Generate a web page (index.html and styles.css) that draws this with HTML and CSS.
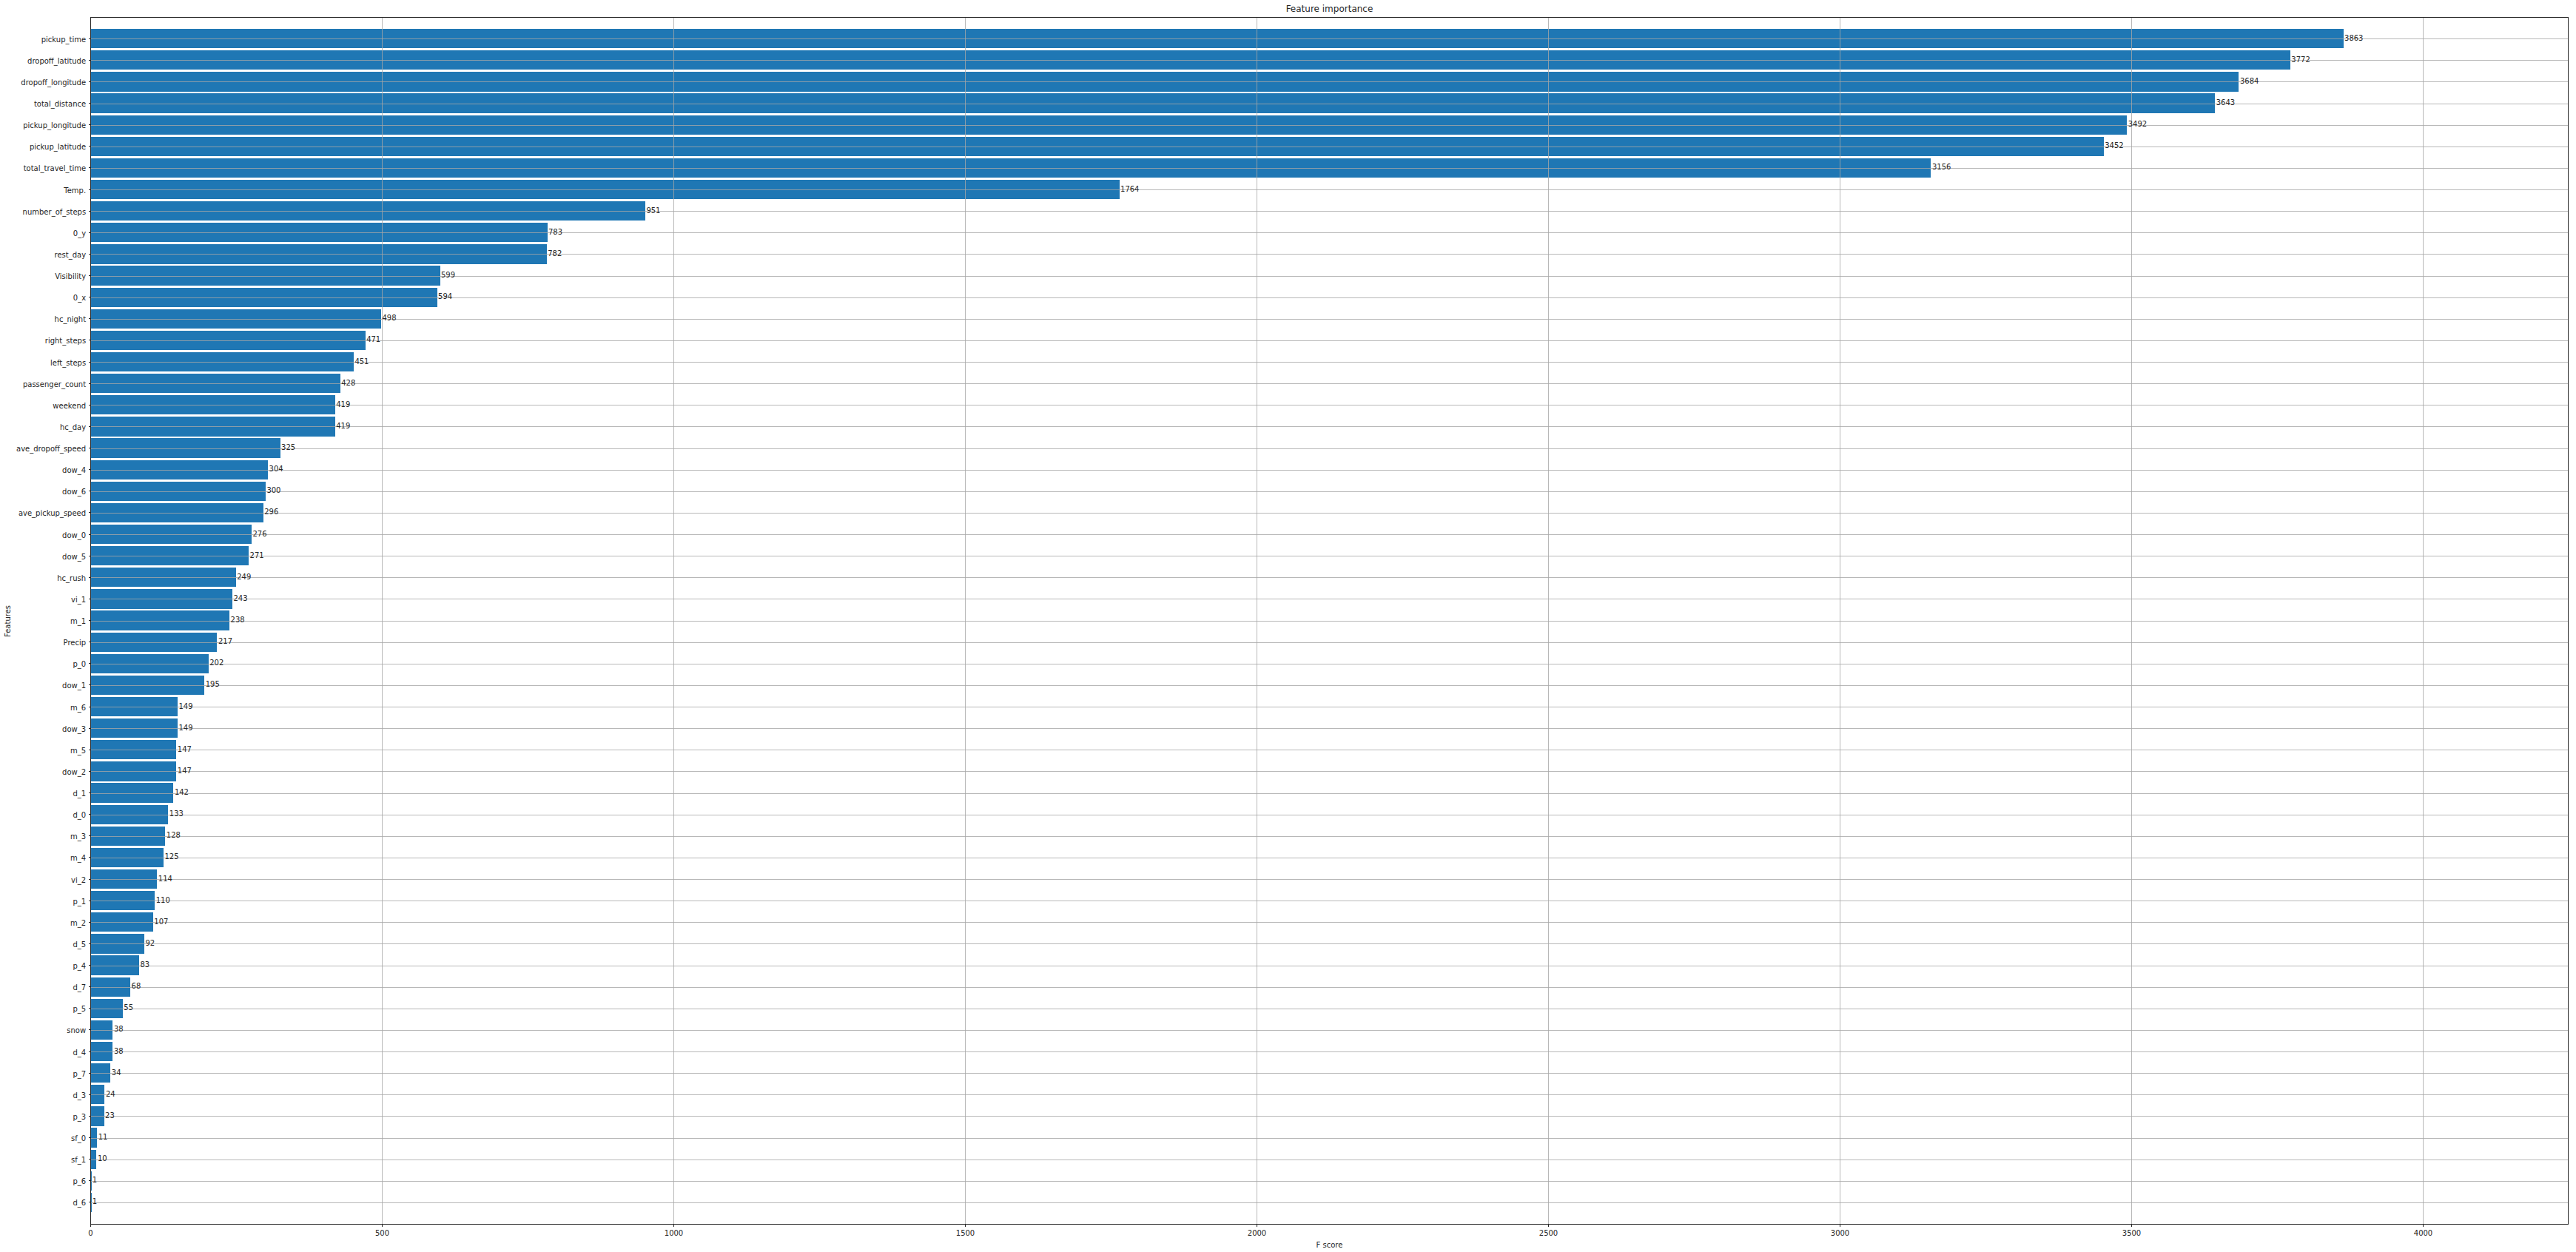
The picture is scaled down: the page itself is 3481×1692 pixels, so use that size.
FILE: index.html
```html
<!DOCTYPE html>
<html lang="en">
<head>
<meta charset="utf-8">
<title>Feature importance</title>
<link rel="stylesheet" href="styles.css">
</head>
<body>
<main class="figure">
  <h1 class="title">Feature importance</h1>
  <div class="ylabel"><span>Features</span></div>
  <ol class="yticks">
    <li>pickup_time</li><li>dropoff_latitude</li><li>dropoff_longitude</li><li>total_distance</li><li>pickup_longitude</li>
    <li>pickup_latitude</li><li>total_travel_time</li><li>Temp.</li><li>number_of_steps</li><li>0_y</li>
    <li>rest_day</li><li>Visibility</li><li>0_x</li><li>hc_night</li><li>right_steps</li>
    <li>left_steps</li><li>passenger_count</li><li>weekend</li><li>hc_day</li><li>ave_dropoff_speed</li>
    <li>dow_4</li><li>dow_6</li><li>ave_pickup_speed</li><li>dow_0</li><li>dow_5</li>
    <li>hc_rush</li><li>vi_1</li><li>m_1</li><li>Precip</li><li>p_0</li>
    <li>dow_1</li><li>m_6</li><li>dow_3</li><li>m_5</li><li>dow_2</li>
    <li>d_1</li><li>d_0</li><li>m_3</li><li>m_4</li><li>vi_2</li>
    <li>p_1</li><li>m_2</li><li>d_5</li><li>p_4</li><li>d_7</li>
    <li>p_5</li><li>snow</li><li>d_4</li><li>p_7</li><li>d_3</li>
    <li>p_3</li><li>sf_0</li><li>sf_1</li><li>p_6</li><li>d_6</li>
  </ol>
  <div class="axes">
    <div class="bars">
      <div class="row"><i class="bar" style="--v:3863"></i><span class="val">3863</span></div>
      <div class="row"><i class="bar" style="--v:3772"></i><span class="val">3772</span></div>
      <div class="row"><i class="bar" style="--v:3684"></i><span class="val">3684</span></div>
      <div class="row"><i class="bar" style="--v:3643"></i><span class="val">3643</span></div>
      <div class="row"><i class="bar" style="--v:3492"></i><span class="val">3492</span></div>
      <div class="row"><i class="bar" style="--v:3452"></i><span class="val">3452</span></div>
      <div class="row"><i class="bar" style="--v:3156"></i><span class="val">3156</span></div>
      <div class="row"><i class="bar" style="--v:1764"></i><span class="val">1764</span></div>
      <div class="row"><i class="bar" style="--v:951"></i><span class="val">951</span></div>
      <div class="row"><i class="bar" style="--v:783"></i><span class="val">783</span></div>
      <div class="row"><i class="bar" style="--v:782"></i><span class="val">782</span></div>
      <div class="row"><i class="bar" style="--v:599"></i><span class="val">599</span></div>
      <div class="row"><i class="bar" style="--v:594"></i><span class="val">594</span></div>
      <div class="row"><i class="bar" style="--v:498"></i><span class="val">498</span></div>
      <div class="row"><i class="bar" style="--v:471"></i><span class="val">471</span></div>
      <div class="row"><i class="bar" style="--v:451"></i><span class="val">451</span></div>
      <div class="row"><i class="bar" style="--v:428"></i><span class="val">428</span></div>
      <div class="row"><i class="bar" style="--v:419"></i><span class="val">419</span></div>
      <div class="row"><i class="bar" style="--v:419"></i><span class="val">419</span></div>
      <div class="row"><i class="bar" style="--v:325"></i><span class="val">325</span></div>
      <div class="row"><i class="bar" style="--v:304"></i><span class="val">304</span></div>
      <div class="row"><i class="bar" style="--v:300"></i><span class="val">300</span></div>
      <div class="row"><i class="bar" style="--v:296"></i><span class="val">296</span></div>
      <div class="row"><i class="bar" style="--v:276"></i><span class="val">276</span></div>
      <div class="row"><i class="bar" style="--v:271"></i><span class="val">271</span></div>
      <div class="row"><i class="bar" style="--v:249"></i><span class="val">249</span></div>
      <div class="row"><i class="bar" style="--v:243"></i><span class="val">243</span></div>
      <div class="row"><i class="bar" style="--v:238"></i><span class="val">238</span></div>
      <div class="row"><i class="bar" style="--v:217"></i><span class="val">217</span></div>
      <div class="row"><i class="bar" style="--v:202"></i><span class="val">202</span></div>
      <div class="row"><i class="bar" style="--v:195"></i><span class="val">195</span></div>
      <div class="row"><i class="bar" style="--v:149"></i><span class="val">149</span></div>
      <div class="row"><i class="bar" style="--v:149"></i><span class="val">149</span></div>
      <div class="row"><i class="bar" style="--v:147"></i><span class="val">147</span></div>
      <div class="row"><i class="bar" style="--v:147"></i><span class="val">147</span></div>
      <div class="row"><i class="bar" style="--v:142"></i><span class="val">142</span></div>
      <div class="row"><i class="bar" style="--v:133"></i><span class="val">133</span></div>
      <div class="row"><i class="bar" style="--v:128"></i><span class="val">128</span></div>
      <div class="row"><i class="bar" style="--v:125"></i><span class="val">125</span></div>
      <div class="row"><i class="bar" style="--v:114"></i><span class="val">114</span></div>
      <div class="row"><i class="bar" style="--v:110"></i><span class="val">110</span></div>
      <div class="row"><i class="bar" style="--v:107"></i><span class="val">107</span></div>
      <div class="row"><i class="bar" style="--v:92"></i><span class="val">92</span></div>
      <div class="row"><i class="bar" style="--v:83"></i><span class="val">83</span></div>
      <div class="row"><i class="bar" style="--v:68"></i><span class="val">68</span></div>
      <div class="row"><i class="bar" style="--v:55"></i><span class="val">55</span></div>
      <div class="row"><i class="bar" style="--v:38"></i><span class="val">38</span></div>
      <div class="row"><i class="bar" style="--v:38"></i><span class="val">38</span></div>
      <div class="row"><i class="bar" style="--v:34"></i><span class="val">34</span></div>
      <div class="row"><i class="bar" style="--v:24"></i><span class="val">24</span></div>
      <div class="row"><i class="bar" style="--v:23"></i><span class="val">23</span></div>
      <div class="row"><i class="bar" style="--v:11"></i><span class="val">11</span></div>
      <div class="row"><i class="bar" style="--v:10"></i><span class="val">10</span></div>
      <div class="row"><i class="bar" style="--v:1"></i><span class="val">1</span></div>
      <div class="row"><i class="bar" style="--v:1"></i><span class="val">1</span></div>
    </div>
    <div class="vgrid"><b></b><b></b><b></b><b></b><b></b><b></b><b></b><b></b></div>
  </div>
  <ul class="xticks">
    <li>0</li><li>500</li><li>1000</li><li>1500</li><li>2000</li><li>2500</li><li>3000</li><li>3500</li><li>4000</li>
  </ul>
  <div class="xlabel">F score</div>
</main>
</body>
</html>
```
FILE: styles.css
```css
* { box-sizing: border-box; }
html, body { margin: 0; padding: 0; background: #fff; }
body {
  width: 3481px;
  height: 1692px;
  overflow: hidden;
  font-family: "DejaVu Sans", sans-serif;
  font-size: 10px;
  color: #262626;
}
.figure {
  display: grid;
  grid-template-columns: 22px 100px 3349px;
  grid-template-rows: 23px 1632px auto auto;
}
.title {
  grid-column: 3;
  grid-row: 1;
  margin: 0;
  padding-top: 5px;
  font-size: 12px;
  font-weight: 400;
  line-height: 14px;
  text-align: center;
}
.ylabel {
  grid-column: 1;
  grid-row: 2;
  display: flex;
  align-items: center;
  justify-content: flex-end;
  padding-right: 5px;
}
.ylabel span {
  writing-mode: vertical-rl;
  transform: rotate(180deg);
  line-height: 12px;
}
.yticks {
  grid-column: 2;
  grid-row: 2;
  list-style: none;
  margin: 0;
  padding: 14.6px 0 0;
  display: grid;
  grid-auto-rows: 29.13px;
}
.yticks li {
  display: flex;
  align-items: center;
  justify-content: flex-end;
  white-space: nowrap;
  padding-top: 2px;
}
.yticks li::after {
  content: "";
  width: 3px;
  height: 1px;
  margin: -2px 0 0 4px;
  background: #262626;
}
.axes {
  grid-column: 3;
  grid-row: 2;
  position: relative;
  border: 1px solid #262626;
  overflow: hidden;
}
.bars {
  padding-top: 13.6px;
  display: grid;
  grid-auto-rows: 29.13px;
}
.row {
  position: relative;
  display: flex;
  align-items: center;
}
.row::after {
  content: "";
  position: absolute;
  left: 0;
  right: 0;
  top: 50%;
  height: 1px;
  background: rgba(166, 166, 166, 0.8);
}
.bar {
  display: block;
  flex: none;
  height: 90%;
  width: calc(var(--v) * 0.788px - 0.5px);
  background: #1f77b4;
}
.val {
  position: relative;
  z-index: 1;
  margin-left: 1.5px;
  padding-bottom: 1px;
  line-height: 12px;
}
.vgrid {
  position: absolute;
  inset: 0;
  display: flex;
}
.vgrid b {
  flex: none;
  width: 394px;
  border-right: 1px solid rgba(166, 166, 166, 0.8);
}
.xticks {
  grid-column: 3;
  grid-row: 3;
  list-style: none;
  margin: 0 0 0 -196.5px;
  padding: 0;
  display: flex;
}
.xticks li {
  flex: none;
  width: 394px;
  display: flex;
  flex-direction: column;
  align-items: center;
  line-height: 12px;
}
.xticks li::before {
  content: "";
  width: 1px;
  height: 3px;
  margin-bottom: 3px;
  background: #262626;
}
.xlabel {
  grid-column: 3;
  grid-row: 4;
  padding-top: 4px;
  line-height: 12px;
  text-align: center;
}
```
